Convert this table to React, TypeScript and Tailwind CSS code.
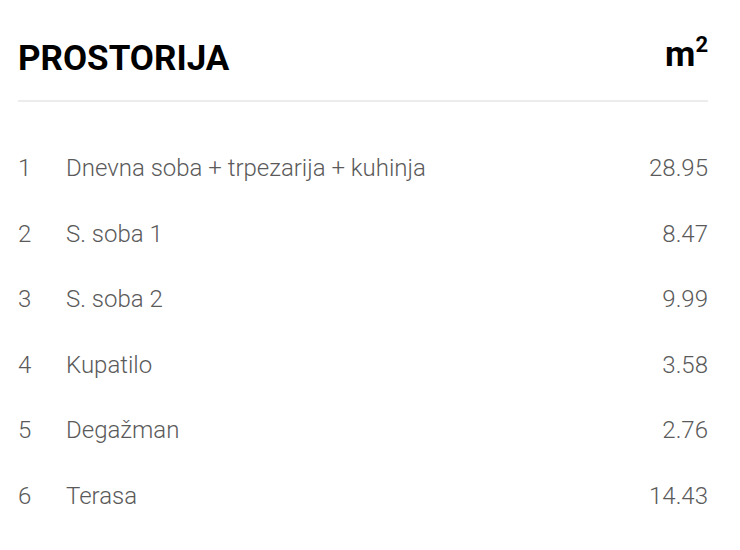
import React from "react";

const rows = [
  ["1", "Dnevna soba + trpezarija + kuhinja", "28.95"],
  ["2", "S. soba 1", "8.47"],
  ["3", "S. soba 2", "9.99"],
  ["4", "Kupatilo", "3.58"],
  ["5", "Degažman", "2.76"],
  ["6", "Terasa", "14.43"],
];

export default function App() {
  return (
    <div
      className="w-[740px] h-[550px] bg-white pl-[18px] pr-[32px] pt-[34px]"
      style={{ fontFamily: "Roboto, 'Liberation Sans', sans-serif" }}
    >
      <div className="flex items-end justify-between border-b-2 border-[#ececec] pb-[20px]">
        <div className="text-[35px] font-bold leading-[42px] text-black">PROSTORIJA</div>
        <div className="text-[35px] font-bold leading-[42px] text-black">
          m<span className="text-[22px] relative top-[-14px]">2</span>
        </div>
      </div>
      <div className="pt-[53px] flex flex-col gap-[38px]">
        {rows.map(([n, name, v]) => (
          <div key={n} className="flex items-center text-[24px] leading-[27.6px] text-[#5a5a5a] font-light">
            <div className="w-[48px]">{n}</div>
            <div className="flex-1">{name}</div>
            <div>{v}</div>
          </div>
        ))}
      </div>
    </div>
  );
}
